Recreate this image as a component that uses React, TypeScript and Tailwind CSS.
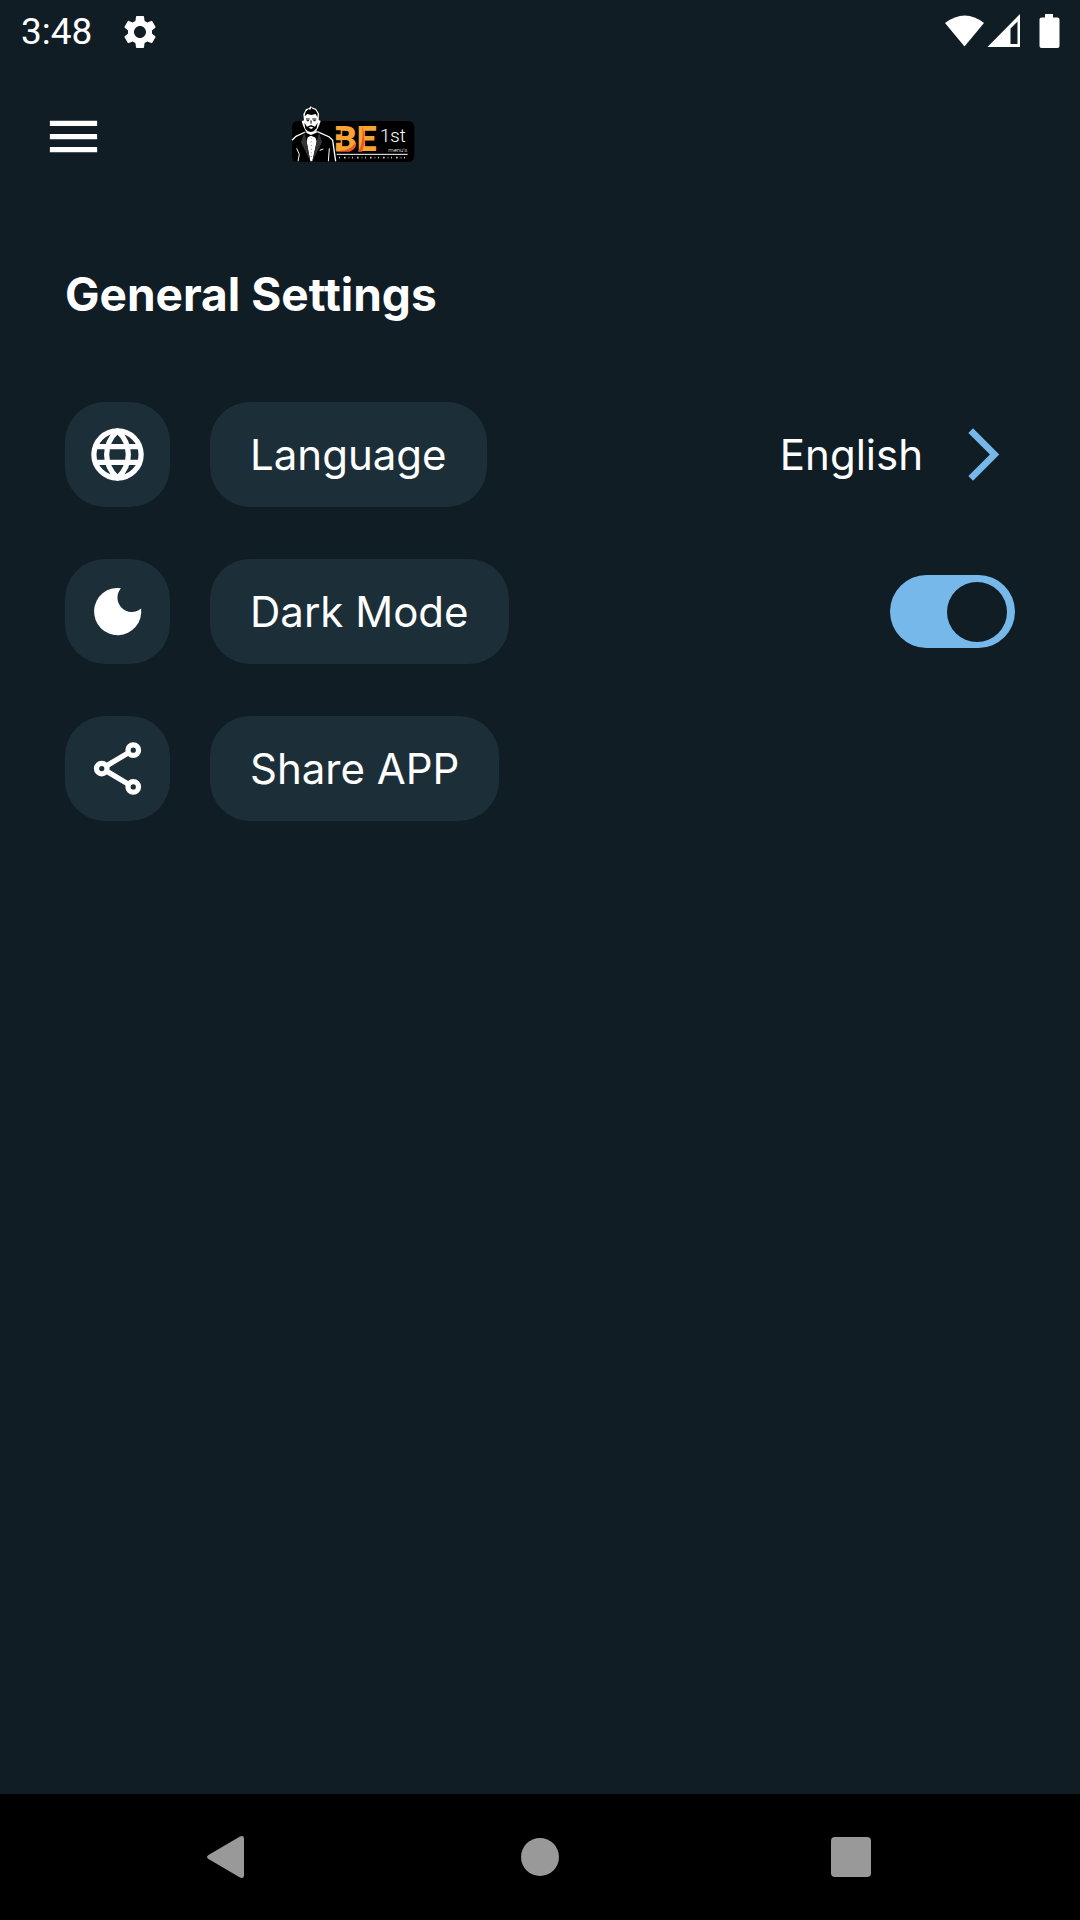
import { useState } from "react";
import type { ReactNode } from "react";
import { MdArrowForwardIos, MdMenu, MdSettings } from "react-icons/md";

function StatusBar() {
    return (
        <div className="flex h-[63px] items-center justify-between pl-[21px] pr-[20px] font-['Roboto',sans-serif] text-white">
            <div className="flex items-center gap-[28px]">
                <span className="text-[37px] leading-[42px]">3:48</span>
                <MdSettings className="size-[40px]" />
            </div>
            <svg viewBox="0 0 115 36" className="h-[36px] w-[115px]" fill="currentColor">
                <path d="M0 9Q20-6 39 9L19.500 32.500Z" />
                <path fillRule="evenodd" d="M75 0V33H42.500ZM72.500 7.500L65.500 14.500V30H72.500Z" />
                <path d="M100 0h8v3.500h4.500q2 0 2 2v26.500q0 2-2 2h-16q-2 0-2-2V5.500q0-2 2-2h3.500z" />
            </svg>
        </div>
    );
}

function Logo() {
    return (
        <svg viewBox="33 30 372 189" className="h-[63px] w-[124px]" role="img" aria-label="BE 1st">
            <rect x="36" y="78" width="367" height="123" rx="18" fill="#000" />
            {/* suit */}
            <path d="M38 199V134L72 115L95 108L120 113L154 130L162 145L167 199Z" fill="#000" />
            <path d="M36 136L48 124L76 111M112 110L148 126L158 136L167 199" fill="none" stroke="#fff" strokeWidth="4" />
            <path d="M77 109L84 122L80 140L91 199H97L110 140L105 122L112 109Z" fill="#fff" />
            <path d="M73 111L63 142L91 199L80 140ZM117 111L126 142L97 199L110 140Z" fill="#333" />
            <path d="M78 113L93 120L109 113V129L93 122L78 129Z" fill="#000" />
            <path d="M94 128V194" stroke="#555" strokeWidth="2" strokeDasharray="3 8" />
            <path d="M50 160L58 178L54 199M148 160L145 199M119 166L130 162" fill="none" stroke="#fff" strokeWidth="3" />
            {/* head */}
            <path d="M65 79L72 76L70 58L78 42L87 40L92 34L99 38L108 41L117 56L116 75L122 78L117 92L109 108L93 115L77 108L70 94Z" fill="#fff" />
            <path d="M74 64L77 50L85 43L91 44L94 37L98 42L106 44L113 56L112 67L107 57L94 60L82 57Z" fill="#000" />
            <path d="M78 72H89M97 72H109M80 77H87M100 77H107M93 76V86" stroke="#000" strokeWidth="3" />
            <path d="M73 83L81 95L93 90L105 95L113 83L110 100L101 109L93 111L84 109L76 101Z" fill="#000" />
            <path d="M86 98Q93 93 100 98L94 102Z" fill="#fff" />
            {/* wordmark */}
            <g fontFamily="Roboto, sans-serif">
                <text x="162" y="169" fontSize="106" fontWeight="900" fill="#f9a332">BE</text>
                <path d="M164 106H182V118H164ZM164 136H182V143H164Z" fill="#000" />
                <path d="M168 169L194 166Q219 159 229 139Q230 163 208 170H168ZM234 170Q251 146 247 93Q260 137 246 170Z" fill="#ec5a24" />
                <text x="300" y="140" fontSize="56" fontWeight="300" fill="#fff">1st</text>
                <text x="325" y="171" fontSize="18" fontWeight="300" fill="#fff">menu&apos;s</text>
            </g>
            <path d="M170 178H383" stroke="#fff" strokeWidth="3" />
            <path d="M177 188H382" stroke="#bbb" strokeWidth="5" strokeDasharray="3 12 5 9 2 8" />
        </svg>
    );
}

function GlobeIcon() {
    return (
        <svg viewBox="0 0 24 24" className="size-[63px]" fill="none" stroke="currentColor" strokeWidth="2">
            <circle cx="12" cy="12" r="9" />
            <path d="M3.500 9H20.500M3.500 15H20.500" />
            <path d="M12 3C6.500 8 6.500 16 12 21C17.500 16 17.500 8 12 3Z" strokeLinejoin="round" />
        </svg>
    );
}

function MoonIcon() {
    return (
        <svg viewBox="0 0 24 24" className="size-[63px]" fill="currentColor">
            <path d="M13.300 3.100A5.500 5.500 0 0 0 21 10.900A9 9 0 1 1 13.300 3.100Z" />
        </svg>
    );
}

function ShareIcon() {
    return (
        <svg viewBox="0 0 24 24" className="size-[63px]" fill="none" stroke="currentColor" strokeWidth="2">
            <circle cx="18" cy="5" r="2" />
            <circle cx="6" cy="12" r="2" />
            <circle cx="18" cy="19" r="2" />
            <path d="M16.200 6L7.800 11M7.800 13L16.200 18" />
        </svg>
    );
}

function IconTile({ children }: { children: ReactNode }) {
    return (
        <span className="flex size-[105px] shrink-0 items-center justify-center rounded-[40px] bg-[#1c2e38]">
            {children}
        </span>
    );
}

const pill =
    "flex h-[105px] items-center rounded-[40px] bg-[#1c2e38] px-[40px] text-[42px] leading-[52px]";

export default function App() {
    const [darkMode, setDarkMode] = useState(true);

    return (
        <div className="flex min-h-screen flex-col bg-[#101d25] font-['Inter',sans-serif] text-white">
            <StatusBar />

            <header className="flex h-[147px] items-center pl-[42px]">
                <button type="button" aria-label="Menu">
                    <MdMenu className="size-[63px]" />
                </button>
                <div className="ml-[186px]">
                    <Logo />
                </div>
            </header>

            <main className="flex-1 px-[65px] pt-[52px]">
                <h1 className="text-[46px] font-bold leading-[64px]">General Settings</h1>

                <div className="mt-[76px] flex flex-col gap-[52px]">
                    <div className="flex items-center gap-[40px]">
                        <IconTile>
                            <GlobeIcon />
                        </IconTile>
                        <span className={pill}>Language</span>
                        <button type="button" className="ml-auto flex items-center gap-[29px] text-[42px] leading-[52px]">
                            English
                            <MdArrowForwardIos className="size-[63px] text-[#77b8ea]" />
                        </button>
                    </div>

                    <div className="flex items-center gap-[40px]">
                        <IconTile>
                            <MoonIcon />
                        </IconTile>
                        <label htmlFor="dark-mode" className={pill}>
                            Dark Mode
                        </label>
                        <input
                            id="dark-mode"
                            type="checkbox"
                            role="switch"
                            checked={darkMode}
                            onChange={(e) => setDarkMode(e.target.checked)}
                            className="ml-auto flex h-[73px] w-[125px] appearance-none items-center rounded-full bg-[#3b4a54] px-[8px] before:size-[60px] before:rounded-full before:bg-[#101d25] before:content-[''] checked:justify-end checked:bg-[#77b8ea]"
                        />
                    </div>

                    <div className="flex items-center gap-[40px]">
                        <IconTile>
                            <ShareIcon />
                        </IconTile>
                        <button type="button" className={pill}>
                            Share APP
                        </button>
                    </div>
                </div>
            </main>

            <nav className="flex h-[126px] bg-black px-[70px] text-[#999]">
                <button type="button" aria-label="Back" className="flex flex-1 items-center justify-center">
                    <svg viewBox="0 0 48 48" className="size-[48px]" fill="currentColor">
                        <path d="M5.500 22L37 3.500Q41 2 41 6V42Q41 46 37 44.500L5.500 26Q2.500 24 5.500 22Z" />
                    </svg>
                </button>
                <button type="button" aria-label="Home" className="flex flex-1 items-center justify-center">
                    <svg viewBox="0 0 48 48" className="size-[48px]" fill="currentColor">
                        <circle cx="24" cy="24" r="19" />
                    </svg>
                </button>
                <button type="button" aria-label="Recent apps" className="flex flex-1 items-center justify-center">
                    <svg viewBox="0 0 48 48" className="size-[48px]" fill="currentColor">
                        <rect x="2" y="4" width="40" height="40" rx="4" />
                    </svg>
                </button>
            </nav>
        </div>
    );
}
